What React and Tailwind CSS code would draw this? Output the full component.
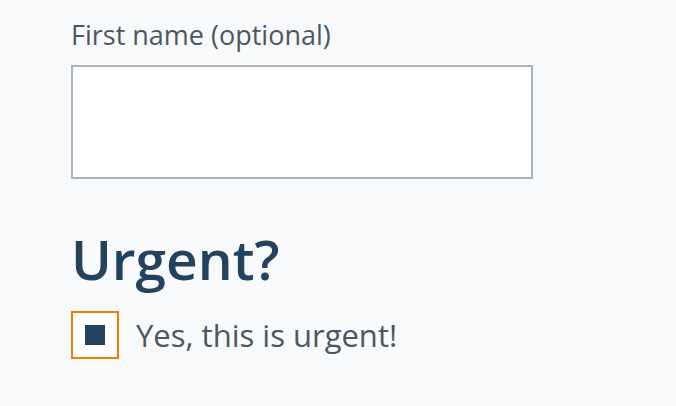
export default function App() {
  return (
    <div
      className="min-h-[406px] w-full bg-[#f8f9fa] px-[71px] pt-[17px]"
      style={{ fontFamily: '"Open Sans", sans-serif' }}
    >
      <label htmlFor="first-name" className="block text-[27px] leading-[36px] text-[#4b5762]">
        First name (optional)
      </label>
      <input
        id="first-name"
        type="text"
        className="mt-[12px] block h-[114px] w-[462px] border-2 border-[#a9b3bd] bg-white outline-none"
      />
      <h2 className="mt-[52px] text-[55px] font-semibold leading-[55px] text-[#23425e]">
        Urgent?
      </h2>
      <div className="mt-[25px] flex items-center gap-[17px]">
        <div className="flex h-[48px] w-[48px] items-center justify-center border-2 border-[#f07f0a] bg-white">
          <div className="h-[20px] w-[20px] bg-[#23425e]" />
        </div>
        <span className="text-[31px] leading-[40px] text-[#4b5762]">Yes, this is urgent!</span>
      </div>
    </div>
  );
}
